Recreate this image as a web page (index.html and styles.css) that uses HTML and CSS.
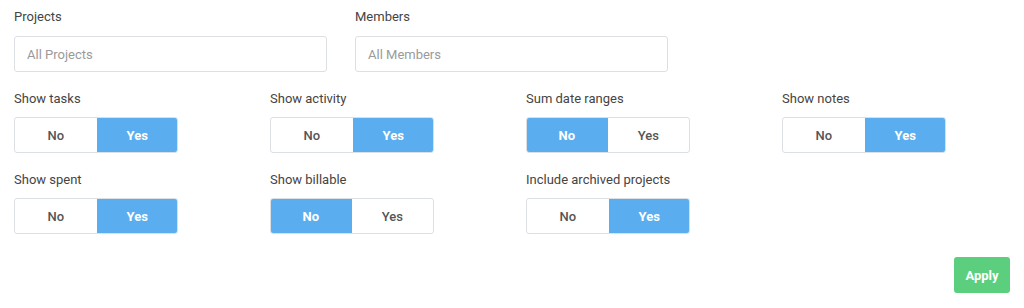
FILE: index.html
```html
<!DOCTYPE html>
<html lang="en">
<head>
    <meta charset="UTF-8">
    <meta name="viewport" content="width=device-width, initial-scale=1.0">
    <title>Report filters</title>
    <link rel="stylesheet" href="styles.css">
</head>
<body>
    <form class="filters">
        <div class="row selects">
            <div class="field">
                <label>Projects</label>
                <input type="text" placeholder="All Projects">
            </div>
            <div class="field">
                <label>Members</label>
                <input type="text" placeholder="All Members">
            </div>
        </div>

        <div class="row toggles">
            <div class="field">
                <label>Show tasks</label>
                <div class="toggle"><span>No</span><span class="on">Yes</span></div>
            </div>
            <div class="field">
                <label>Show activity</label>
                <div class="toggle"><span>No</span><span class="on">Yes</span></div>
            </div>
            <div class="field">
                <label>Sum date ranges</label>
                <div class="toggle"><span class="on">No</span><span>Yes</span></div>
            </div>
            <div class="field">
                <label>Show notes</label>
                <div class="toggle"><span>No</span><span class="on">Yes</span></div>
            </div>
        </div>

        <div class="row toggles">
            <div class="field">
                <label>Show spent</label>
                <div class="toggle"><span>No</span><span class="on">Yes</span></div>
            </div>
            <div class="field">
                <label>Show billable</label>
                <div class="toggle"><span class="on">No</span><span>Yes</span></div>
            </div>
            <div class="field">
                <label>Include archived projects</label>
                <div class="toggle"><span>No</span><span class="on">Yes</span></div>
            </div>
        </div>

        <div class="actions">
            <button type="submit">Apply</button>
        </div>
    </form>
</body>
</html>
```
FILE: styles.css
```css
body {
    margin: 0;
    background-color: #fff;
    color: #444;
    font-family: Roboto, 'Liberation Sans', sans-serif;
    font-size: 13px;
}
.filters {
    padding: 9px 14px 0 14px;
    display: flex;
    flex-direction: column;
    gap: 19px;
}
.selects {
    display: flex;
    gap: 28px;
}
.toggles {
    display: grid;
    grid-template-columns: 256px 256px 256px 1fr;
}
.field label {
    display: block;
    line-height: 16px;
    margin-bottom: 10px;
    color: #444;
}
.selects label {
    margin-bottom: 11px;
}
input[type="text"] {
    box-sizing: border-box;
    width: 313px;
    height: 36px;
    padding: 0 12px;
    border: 1px solid #dcdfe4;
    border-radius: 3px;
    font-family: inherit;
    font-size: 13px;
    color: #444;
}
input::placeholder {
    color: #9a9a9a;
}
.toggle {
    display: flex;
    width: 164px;
    height: 36px;
    box-sizing: border-box;
    border: 1px solid #dcdfe4;
    border-radius: 3px;
    overflow: hidden;
}
.toggle span {
    flex: 1;
    display: flex;
    align-items: center;
    justify-content: center;
    font-weight: 500;
    color: #555;
}
.toggle span.on {
    background-color: #5aaef0;
    border-top: 1px solid #4a9be0;
    margin: -1px 0 -1px 0;
    color: #fff;
    font-weight: 700;
}
.toggle span.on:first-child {
    margin-left: -1px;
}
.toggle span.on:last-child {
    margin-right: -1px;
}
.actions {
    display: flex;
    justify-content: flex-end;
    margin-top: 4px;
}
button {
    width: 56px;
    height: 36px;
    border: none;
    border-radius: 3px;
    background-color: #5ccf7f;
    color: #fff;
    font-family: inherit;
    font-size: 13px;
    font-weight: 700;
    cursor: pointer;
}
```
